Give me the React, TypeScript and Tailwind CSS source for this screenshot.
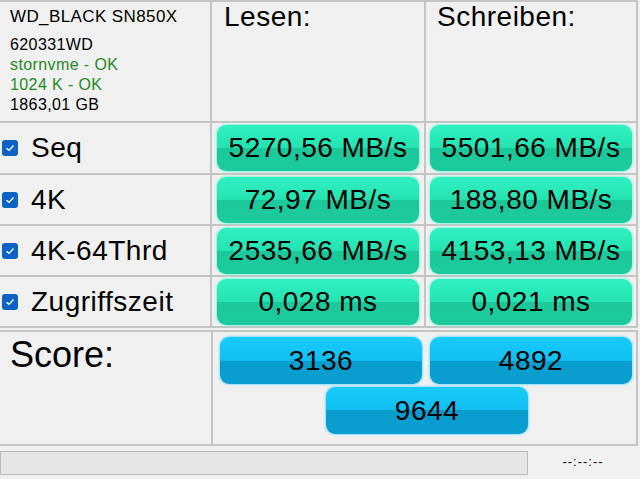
import React from "react";

const rows = [
  { label: "Seq", read: "5270,56 MB/s", write: "5501,66 MB/s" },
  { label: "4K", read: "72,97 MB/s", write: "188,80 MB/s" },
  { label: "4K-64Thrd", read: "2535,66 MB/s", write: "4153,13 MB/s" },
  { label: "Zugriffszeit", read: "0,028 ms", write: "0,021 ms" },
];

function Check() {
  return (
    <div className="ml-[2px] w-[16px] h-[16px] rounded-[3px] bg-[#0b63c4] flex items-center justify-center shrink-0">
      <svg width="10" height="8" viewBox="0 0 10 8">
        <path d="M1.5 4.2 L4 6.4 L8.5 1.6" fill="none" stroke="white" strokeWidth="1.4" />
      </svg>
    </div>
  );
}

function GreenBox({ text }: { text: string }) {
  return (
    <div className="w-[202px] h-[46px] rounded-[9px] flex items-center justify-center text-[28px] tracking-[0.5px] text-black bg-[linear-gradient(to_bottom,#30f0c2_0%,#25e3b1_50%,#1bc89a_50%,#1ccb9d_100%)] shadow-[0_0_2px_1px_#8ef5d9]">
      {text}
    </div>
  );
}

function BlueBox({ text }: { text: string }) {
  return (
    <div className="w-[202px] h-[47px] rounded-[9px] flex items-center justify-center text-[28px] tracking-[0.5px] text-black bg-[linear-gradient(to_bottom,#18cbfa_0%,#10bff2_50%,#089dcd_50%,#0a9fd0_100%)] shadow-[0_0_2px_1px_#8fe0fb]">
      {text}
    </div>
  );
}

export default function App() {
  return (
    <div
      className="w-[640px] h-[479px] bg-[#f0f0f0] overflow-hidden text-black"
      style={{ fontFamily: '"Liberation Sans", Arial, sans-serif' }}
    >
      <div className="w-[638px] grid grid-cols-[210px_212px_210px] grid-rows-[119px_50px_49px_49px_49px] gap-[2px] bg-[#c4c4c4] border-t-2 border-r-2 border-b-2 border-[#c4c4c4]">
        <div className="bg-[#f0f0f0] pl-[10px] pt-[5px] tracking-[0.4px]">
          <div className="text-[17px] leading-[20px]">WD_BLACK SN850X</div>
          <div className="mt-[8px] text-[16px] leading-[20px]">620331WD</div>
          <div className="text-[16px] leading-[20px] text-[#1f8a1f]">stornvme - OK</div>
          <div className="text-[16px] leading-[20px] text-[#1f8a1f]">1024 K - OK</div>
          <div className="text-[16px] leading-[20px]">1863,01 GB</div>
        </div>
        <div className="bg-[#f0f0f0] pl-[12px] text-[28px] leading-[30px] tracking-[0.5px]">Lesen:</div>
        <div className="bg-[#f0f0f0] pl-[11px] text-[28px] leading-[30px] tracking-[0.5px]">Schreiben:</div>
        {rows.map((r) => (
          <React.Fragment key={r.label}>
            <div className="bg-[#f0f0f0] flex items-center gap-[13px]">
              <Check />
              <span className="text-[28px] tracking-[0.5px]">{r.label}</span>
            </div>
            <div className="bg-[#f0f0f0] flex items-center justify-center">
              <GreenBox text={r.read} />
            </div>
            <div className="bg-[#f0f0f0] flex items-center justify-center">
              <GreenBox text={r.write} />
            </div>
          </React.Fragment>
        ))}
      </div>

      <div className="mt-[2px] w-[638px] h-[116px] border-t-2 border-r-2 border-b-2 border-[#c4c4c4] grid grid-cols-[211px_423px] gap-[2px] bg-[#c4c4c4]">
        <div className="bg-[#f0f0f0] pl-[10px] pt-[3px] text-[36px] leading-[40px]">Score:</div>
        <div className="bg-[#f0f0f0] pl-[7px] pt-[5px] flex flex-col gap-[3px]">
          <div className="flex gap-[8px]">
            <BlueBox text="3136" />
            <BlueBox text="4892" />
          </div>
          <div className="pl-[106px]">
            <BlueBox text="9644" />
          </div>
        </div>
      </div>

      <div className="flex items-start">
        <div className="mt-[5px] w-[528px] h-[24px] border border-[#bcbcbc] bg-[#e6e6e6]" />
        <div className="mt-[9px] w-[110px] text-center text-[13px] leading-[14px] tracking-[1px]">--:--:--</div>
      </div>
    </div>
  );
}
